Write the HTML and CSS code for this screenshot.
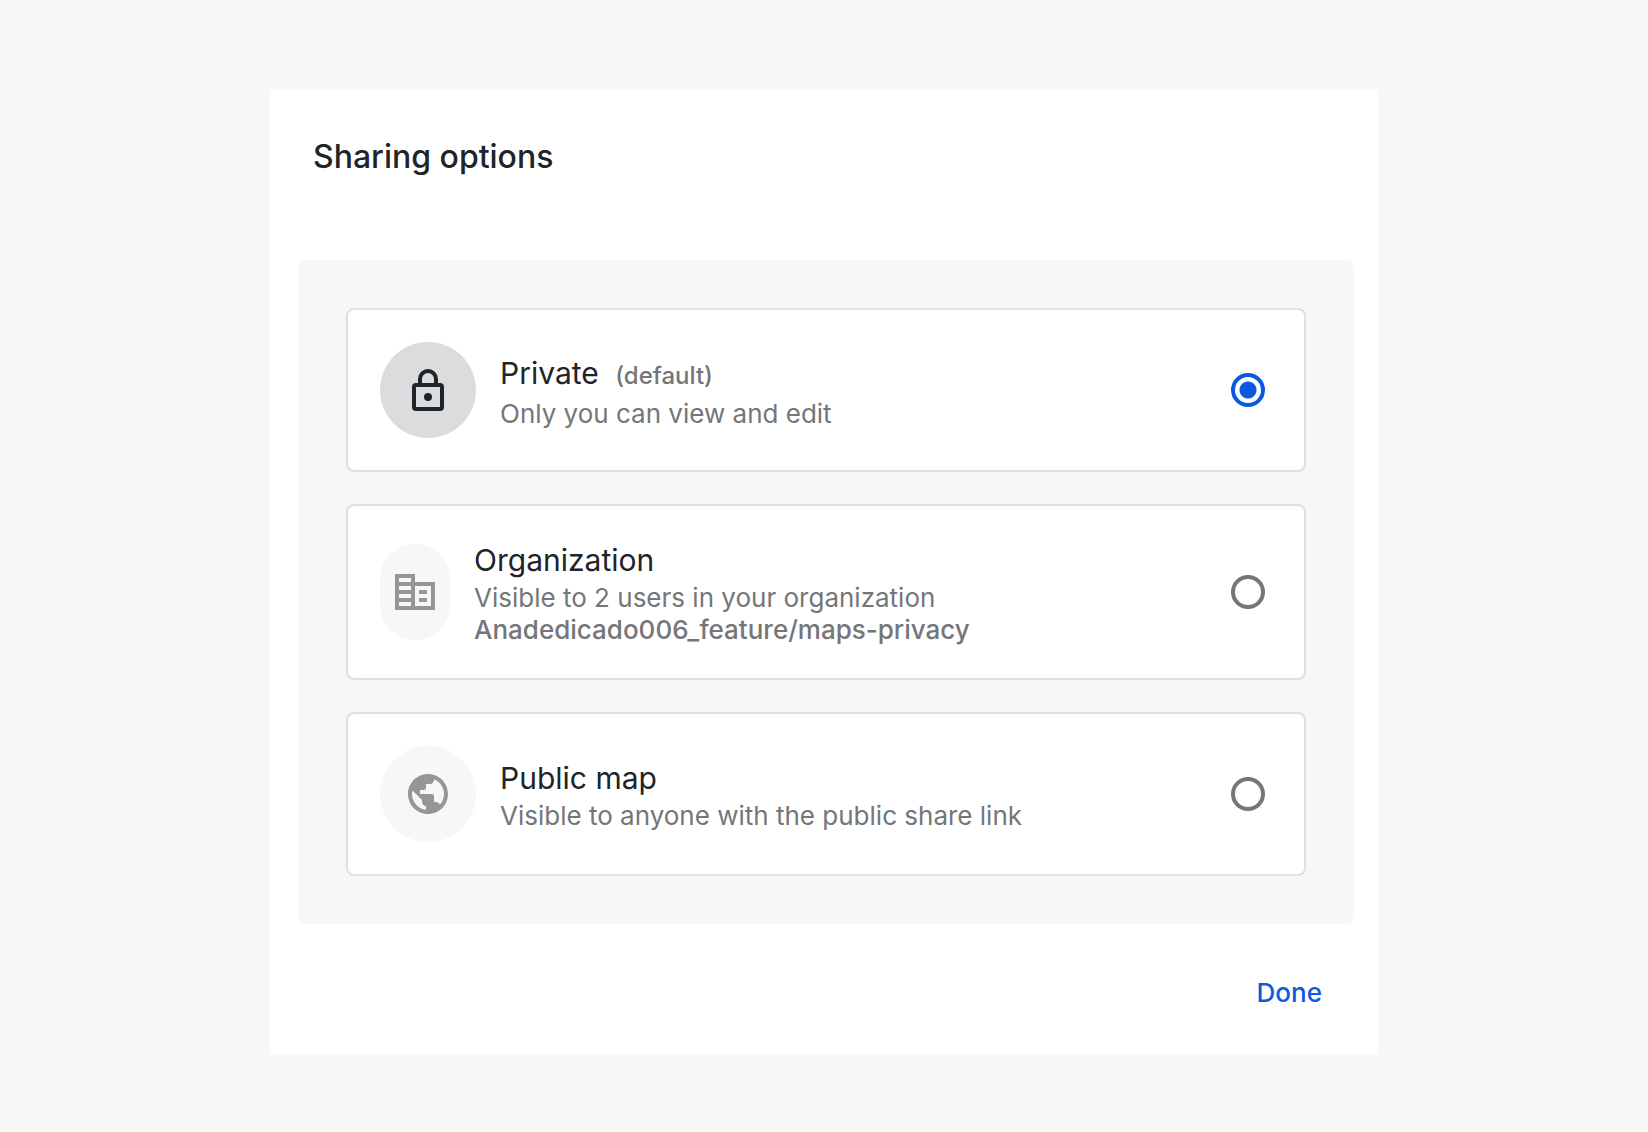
FILE: index.html
```
<!DOCTYPE html>
<html lang="en">
<head>
  <meta charset="utf-8">
  <meta name="viewport" content="width=device-width, initial-scale=1">
  <title>Sharing options</title>
  <link rel="stylesheet" href="styles.css">
</head>
<body>
  <main class="dialog">
    <header class="dialog-header">
      <h1 class="dialog-title" id="sharing-title">Sharing options</h1>
    </header>
    <form class="sharing">
      <div class="options" role="radiogroup" aria-labelledby="sharing-title">
        <label class="option" for="share-private">
          <span class="option-icon option-icon-active">
            <svg class="icon" viewBox="0 0 24 24" aria-hidden="true">
              <path fill-rule="evenodd" d="M12 1.500a5 5 0 0 1 5 5V8.500h1a2 2 0 0 1 2 2v10a2 2 0 0 1-2 2H6a2 2 0 0 1-2-2v-10a2 2 0 0 1 2-2h1V6.500a5 5 0 0 1 5-5zm0 2a3 3 0 0 0-3 3v2h6v-2a3 3 0 0 0-3-3zM6 10.500v10h12v-10H6zm6 3a2 2 0 1 1 0 4 2 2 0 0 1 0-4z"/>
            </svg>
          </span>
          <span class="option-text">
            <span class="option-name">Private <span class="option-tag">(default)</span></span>
            <span class="option-detail">Only you can view and edit</span>
          </span>
          <input class="radio" type="radio" name="sharing" id="share-private" checked>
        </label>
        <label class="option" for="share-organization">
          <span class="option-icon option-icon-narrow">
            <svg class="icon" viewBox="0 0 24 24" aria-hidden="true">
              <path d="M12 7V3H2v18h20V7H12zM10 19H4v-2h6v2zm0-4H4v-2h6v2zm0-4H4V9h6v2zm0-4H4V5h6v2zm10 12h-8V9h8v10zm-2-8h-4v2h4v-2zm0 4h-4v2h4v-2z"/>
            </svg>
          </span>
          <span class="option-text">
            <span class="option-name">Organization</span>
            <span class="option-detail">Visible to 2 users in your organization</span>
            <span class="option-detail option-detail-strong">Anadedicado006_feature/maps-privacy</span>
          </span>
          <input class="radio" type="radio" name="sharing" id="share-organization">
        </label>
        <label class="option" for="share-public">
          <span class="option-icon">
            <svg class="icon" viewBox="0 0 24 24" aria-hidden="true">
              <path d="M12 2C6.480 2 2 6.480 2 12s4.480 10 10 10 10-4.480 10-10S17.520 2 12 2zm-1 17.930c-3.950-.490-7-3.850-7-7.930 0-.620.080-1.210.210-1.790L9 15v1c0 1.100.900 2 2 2v1.930zm6.900-2.540c-.260-.810-1-1.390-1.900-1.390h-1v-3c0-.550-.450-1-1-1H8v-2h2c.550 0 1-.450 1-1V7h2c1.100 0 2-.900 2-2v-.410c2.930 1.190 5 4.060 5 7.410 0 2.080-.800 3.970-2.100 5.390z"/>
            </svg>
          </span>
          <span class="option-text">
            <span class="option-name">Public map</span>
            <span class="option-detail">Visible to anyone with the public share link</span>
          </span>
          <input class="radio" type="radio" name="sharing" id="share-public">
        </label>
      </div>
      <div class="actions">
        <button class="done" type="button">Done</button>
      </div>
    </form>
  </main>
</body>
</html>
```
FILE: styles.css
```
* {
  box-sizing: border-box;
}

body {
  margin: 0;
  padding: 90px 16px 78px;
  background: #f6f8f7;
  color: #202427;
  font-family: Inter, "Liberation Sans", sans-serif;
}

.dialog {
  max-width: 1108px;
  margin: 0 auto;
  background: #fff;
}

.dialog-header {
  padding: 43px 43px 79px;
}

.dialog-title {
  margin: 0;
  font-size: 32px;
  line-height: 48px;
  font-weight: 500;
}

.options {
  display: flex;
  flex-direction: column;
  gap: 32px;
  margin: 0 24px 0 28px;
  padding: 48px;
  border-radius: 8px;
  background: #f6f8f7;
}

.option {
  display: flex;
  align-items: center;
  gap: 24px;
  padding: 32px 39px 32px 32px;
  border: 2px solid #dfe1e1;
  border-radius: 8px;
  background: #fff;
  cursor: pointer;
}

.option-icon {
  display: flex;
  flex: none;
  align-items: center;
  justify-content: center;
  width: 96px;
  height: 96px;
  border-radius: 48px;
  background: #f6f8f7;
  color: #959698;
}

.option-icon-active {
  background: #dbdcde;
  color: #202427;
}

.option-icon-narrow {
  width: 70px;
}

.icon {
  flex: none;
  width: 48px;
  height: 48px;
  fill: currentColor;
}

.option-text {
  display: flex;
  flex: 1;
  flex-direction: column;
  min-width: 0;
}

.option-name {
  font-size: 30px;
  line-height: 44px;
}

.option-tag {
  margin-left: 8px;
  color: #747678;
  font-size: 24px;
  font-weight: 500;
}

.option-detail {
  color: #747678;
  font-size: 26px;
  line-height: 32px;
}

.option-detail-strong {
  font-weight: 500;
}

.radio {
  flex: none;
  appearance: none;
  width: 34px;
  height: 34px;
  margin: 0;
  border: 4px solid #747678;
  border-radius: 50%;
}

.radio:checked {
  border-color: #0c58e0;
  background: radial-gradient(circle, #0c58e0 8px, transparent 9px);
}

.actions {
  display: flex;
  justify-content: flex-end;
  padding: 45px 40px 37px;
}

.done {
  padding: 8px 16px;
  border: 0;
  background: none;
  color: #0c58e0;
  font-family: inherit;
  font-size: 26px;
  line-height: 32px;
  font-weight: 500;
  cursor: pointer;
}
```
